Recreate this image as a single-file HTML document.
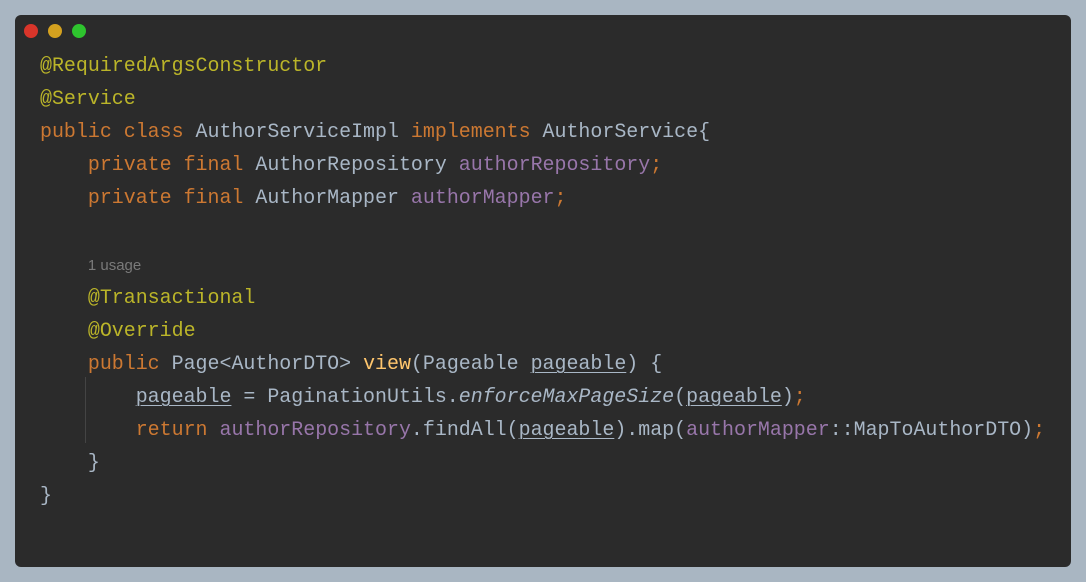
<!DOCTYPE html>
<html><head><meta charset="utf-8"><style>
html,body{margin:0;padding:0;}
body{width:1086px;height:582px;background:#a9b6c2;position:relative;overflow:hidden;}
.win{position:absolute;left:15px;top:15px;width:1056px;height:552px;background:#2b2b2b;border-radius:6px;}
.dot{position:absolute;top:9px;width:14px;height:14px;border-radius:50%;}
pre{position:absolute;left:25px;top:34px;margin:0;font-family:"Liberation Mono",monospace;font-size:19.95px;line-height:33px;color:#a9b7c6;}
.a{color:#bbb529}.k{color:#cc7832}.f{color:#9876aa}.m{color:#ffc66d}.i{font-style:italic}
.u{text-decoration:underline;text-decoration-thickness:1px;text-underline-offset:3px}
.us{font-family:"Liberation Sans",sans-serif;font-size:15px;color:#7a7a7a;position:relative;top:1px}
.guide{position:absolute;left:70px;top:362px;width:1px;height:66px;background:#444}
</style></head><body>
<div class="win">
<div class="dot" style="left:9px;background:#d9352a"></div>
<div class="dot" style="left:33px;background:#d4a11f"></div>
<div class="dot" style="left:57px;background:#2ec42e"></div>
<div class="guide"></div>
<pre><span class="a">@RequiredArgsConstructor</span>
<span class="a">@Service</span>
<span class="k">public class</span> AuthorServiceImpl <span class="k">implements</span> AuthorService{
    <span class="k">private final</span> AuthorRepository <span class="f">authorRepository</span><span class="k">;</span>
    <span class="k">private final</span> AuthorMapper <span class="f">authorMapper</span><span class="k">;</span>

    <span class="us">1 usage</span>
    <span class="a">@Transactional</span>
    <span class="a">@Override</span>
    <span class="k">public</span> Page&lt;AuthorDTO&gt; <span class="m">view</span>(Pageable <span class="u">pageable</span>) {
        <span class="u">pageable</span> = PaginationUtils.<span class="i">enforceMaxPageSize</span>(<span class="u">pageable</span>)<span class="k">;</span>
        <span class="k">return</span> <span class="f">authorRepository</span>.findAll(<span class="u">pageable</span>).map(<span class="f">authorMapper</span>::MapToAuthorDTO)<span class="k">;</span>
    }
}</pre>
</div>
</body></html>
